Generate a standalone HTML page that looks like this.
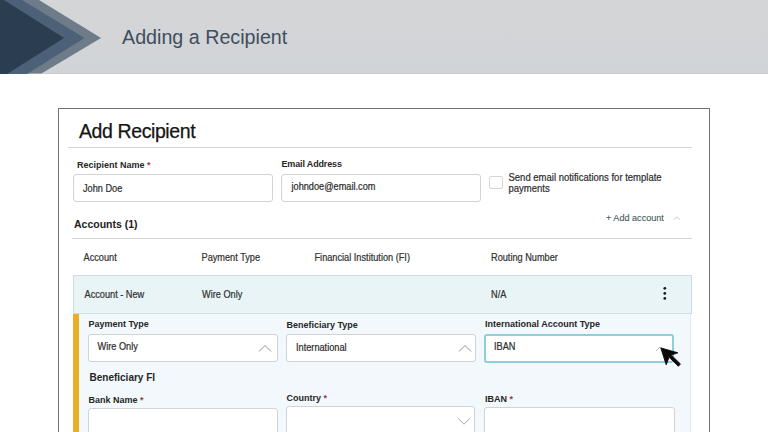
<!DOCTYPE html>
<html><head><meta charset="utf-8">
<style>
*{margin:0;padding:0;box-sizing:border-box}
html,body{width:768px;height:432px;overflow:hidden;background:#fff;font-family:"Liberation Sans",sans-serif;position:relative}
.a{position:absolute;white-space:nowrap}
.hdr{left:0;top:0;width:768px;height:73.5px;background:linear-gradient(#d4d5d7,#d1d4d7);box-shadow:inset 0 -1px 0 #cbcdd0}
.title{left:122px;top:22px;font-size:19.7px;line-height:30px;color:#3f4e5e}
.card{left:58px;top:108px;width:652px;height:400px;border:1.3px solid #747474}
.h1{left:79px;top:117.3px;font-size:19.5px;line-height:28px;color:#151515;letter-spacing:-0.4px;-webkit-text-stroke:0.25px #151515}
.sep{height:1.2px;background:#d6d6d6}
.lbl{font-size:9px;font-weight:bold;color:#262626;line-height:12px;transform:scaleY(1.06);transform-origin:0 9.1px}
.st{color:#9c3b3b}
.inp{border:1px solid #d3d3d3;border-radius:3px;background:#fff}
.txt{font-size:9.2px;color:#2e2e2e;line-height:12px;-webkit-text-stroke:0.2px #2e2e2e;transform:scaleY(1.1);transform-origin:0 9.2px}
.th{font-size:9.2px;color:#333;line-height:12px;-webkit-text-stroke:0.2px #333;transform:scaleY(1.1);transform-origin:0 9.2px}
</style></head><body>
<div class="a hdr"></div>
<svg class="a" style="left:0;top:0" width="110" height="74" viewBox="0 0 110 74">
  <polygon points="0,0 39,0 101,38 41.5,73.5 0,73.5" fill="#6e7b88"/>
  <polygon points="0,0 22,0 84.5,38 27,74 0,74" fill="#4c6177"/>
  <polygon points="0,0 4,0 64,38 7,74 0,74" fill="#2b3e51"/>
</svg>
<div class="a title">Adding a Recipient</div>

<div class="a card"></div>
<div class="a h1">Add Recipient</div>
<div class="a sep" style="left:67.5px;top:147.2px;width:624.5px"></div>

<div class="a lbl" style="left:77px;top:158.7px">Recipient Name <span class="st">*</span></div>
<div class="a inp" style="left:73px;top:173.8px;width:200px;height:28.5px"></div>
<div class="a txt" style="left:83px;top:182.5px">John Doe</div>

<div class="a lbl" style="left:281.5px;top:157.8px;letter-spacing:-0.15px">Email Address</div>
<div class="a inp" style="left:281px;top:173.8px;width:200px;height:28.5px"></div>
<div class="a txt" style="left:291.5px;top:180.5px">johndoe@email.com</div>

<div class="a inp" style="left:489px;top:176px;width:13.5px;height:13px;border-radius:2px;border-color:#d6d6d6"></div>
<div class="a txt" style="left:508.5px;top:172.8px;line-height:9.6px;font-size:9.5px;transform-origin:0 8.1px">Send email notifications for template<br>payments</div>

<div class="a txt" style="left:606px;top:212px;color:#3f5a5a;-webkit-text-stroke:0.1px #3f5a5a;transform:none;font-size:9.1px">+ Add account</div>
<svg class="a" style="left:672px;top:215px" width="10" height="6" viewBox="0 0 10 6"><polyline points="1.5,4.8 4.8,1.8 8.1,4.8" fill="none" stroke="#cdcdcd" stroke-width="1"/></svg>

<div class="a" style="left:74px;top:216px;font-size:10.5px;font-weight:bold;color:#222;line-height:16px">Accounts (1)</div>
<div class="a sep" style="left:72px;top:237.5px;width:620px"></div>

<div class="a th" style="left:83.5px;top:251.5px">Account</div>
<div class="a th" style="left:201.5px;top:251.5px">Payment Type</div>
<div class="a th" style="left:314.5px;top:251.5px">Financial Institution (FI)</div>
<div class="a th" style="left:491px;top:251.5px">Routing Number</div>

<div class="a" style="left:72.5px;top:274.8px;width:619px;height:39.2px;background:#e9f4f6;border:1px solid #d0dcdf"></div>
<div class="a th" style="left:84.5px;top:289px">Account - New</div>
<div class="a th" style="left:202px;top:289px">Wire Only</div>
<div class="a th" style="left:491px;top:289px">N/A</div>
<svg class="a" style="left:660px;top:284px" width="10" height="18" viewBox="0 0 10 18"><circle cx="4.8" cy="4.3" r="1.4" fill="#1a1a1a"/><circle cx="4.8" cy="9.4" r="1.4" fill="#1a1a1a"/><circle cx="4.8" cy="14.4" r="1.4" fill="#1a1a1a"/></svg>

<div class="a" style="left:73px;top:313.5px;width:618px;height:130px;background:#f2f8fb;border-right:1px solid #e3eaee"></div>
<div class="a" style="left:73px;top:313.5px;width:5.8px;height:130px;background:#e8ae25"></div>

<div class="a lbl" style="left:88.5px;top:318px">Payment Type</div>
<div class="a lbl" style="left:286.5px;top:318.5px">Beneficiary Type</div>
<div class="a lbl" style="left:485px;top:318px">International Account Type</div>

<div class="a inp" style="left:88.2px;top:333.7px;width:190.3px;height:28.5px"></div>
<div class="a inp" style="left:286.3px;top:333.7px;width:190px;height:28.5px"></div>
<div class="a inp" style="left:483.5px;top:333.7px;width:190.5px;height:28.9px;border:2px solid #8fd0d8"></div>

<div class="a txt" style="left:97.5px;top:341px">Wire Only</div>
<div class="a txt" style="left:296px;top:341.5px">International</div>
<div class="a txt" style="left:494px;top:341px">IBAN</div>

<svg class="a" style="left:258px;top:343px" width="14" height="10" viewBox="0 0 14 10"><polyline points="1,8.5 7,2.5 13,8.5" fill="none" stroke="#959595" stroke-width="1"/></svg>
<svg class="a" style="left:458px;top:343px" width="14" height="10" viewBox="0 0 14 10"><polyline points="1,8.5 7,2.5 13,8.5" fill="none" stroke="#959595" stroke-width="1"/></svg>
<svg class="a" style="left:655px;top:344px" width="10" height="8" viewBox="0 0 10 8"><polyline points="1,7 5,3 9,7" fill="none" stroke="#bdbdbd" stroke-width="1"/></svg>

<div class="a" style="left:89.5px;top:371px;font-size:10px;font-weight:bold;color:#262626;line-height:14px">Beneficiary FI</div>

<div class="a lbl" style="left:88.5px;top:394px">Bank Name <span class="st">*</span></div>
<div class="a lbl" style="left:286.5px;top:392px">Country <span class="st">*</span></div>
<div class="a lbl" style="left:485px;top:392.5px">IBAN <span class="st">*</span></div>

<div class="a inp" style="left:88.2px;top:407.7px;width:190px;height:40px"></div>
<div class="a inp" style="left:286.3px;top:406px;width:189px;height:40px"></div>
<div class="a inp" style="left:484px;top:407px;width:190.5px;height:40px"></div>
<svg class="a" style="left:457px;top:415.5px" width="14" height="10" viewBox="0 0 14 10"><polyline points="1,2.2 7,8.2 13,2.2" fill="none" stroke="#a5a5a5" stroke-width="1"/></svg>

<svg class="a" style="left:650.3px;top:340px" width="40" height="35" viewBox="0 0 40 35">
  <path d="M10.8,7.9 L27.9,12.8 L21.3,15.1 L30.4,23.9 L28.4,26.3 L19.1,17.3 L16.2,24.8 Z" fill="#0a0a0a" stroke="#0a0a0a" stroke-width="0.9" stroke-linejoin="round"/>
</svg>
</body></html>
